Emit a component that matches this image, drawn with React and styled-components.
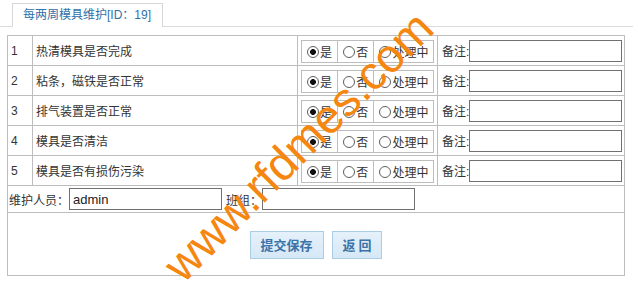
import React from 'react';
import styled, { createGlobalStyle } from 'styled-components';

const GlobalStyle = createGlobalStyle`
  html, body {
    margin: 0;
    padding: 0;
    background: #fff;
  }
  body {
    font-family: "Liberation Sans", "Noto Sans CJK SC", sans-serif;
    font-size: 12px;
    color: #333;
  }
`;

const items = [
  { no: 1, title: '热清模具是否完成' },
  { no: 2, title: '粘条，磁铁是否正常' },
  { no: 3, title: '排气装置是否正常' },
  { no: 4, title: '模具是否清洁' },
  { no: 5, title: '模具是否有损伤污染' },
];

const options = [
  { label: '是', width: 37 },
  { label: '否', width: 37 },
  { label: '处理中', width: 60 },
];

const App = () => {
  return (
    <Page>
      <GlobalStyle />
      <TabBar>
        <Tab>每两周模具维护[ID：19]</Tab>
      </TabBar>
      <Grid>
        <colgroup>
          <col style={{ width: 25 }} />
          <col style={{ width: 265 }} />
          <col style={{ width: 140 }} />
          <col />
        </colgroup>
        <tbody>
          {items.map((item) => (
            <Row key={item.no}>
              <Cell>{item.no}</Cell>
              <Cell>{item.title}</Cell>
              <Cell $center>
                <RadioTable>
                  <tbody>
                    <tr>
                      {options.map((opt, i) => (
                        <RadioCell key={opt.label} style={{ width: opt.width }}>
                          <Choice>
                            <Radio type="radio" name={`item${item.no}`} defaultChecked={i === 0} />
                            {opt.label}
                          </Choice>
                        </RadioCell>
                      ))}
                    </tr>
                  </tbody>
                </RadioTable>
              </Cell>
              <Cell>
                <Remark>
                  备注:<TextInput type="text" />
                </Remark>
              </Cell>
            </Row>
          ))}
          <InfoRow>
            <Cell colSpan={4}>
              <Fields>
                维护人员：<TextInput type="text" defaultValue="admin" />
                <FieldLabel>班组：</FieldLabel>
                <TextInput type="text" />
              </Fields>
            </Cell>
          </InfoRow>
          <ActionRow>
            <Cell colSpan={4}>
              <Actions>
                <Button>提交保存</Button>
                <Button>返 回</Button>
              </Actions>
            </Cell>
          </ActionRow>
        </tbody>
      </Grid>
      <Watermark>www.rfdmes.com</Watermark>
    </Page>
  );
};

const Page = styled.div`
  position: relative;
  width: 633px;
  height: 288px;
  padding-top: 3px;
  box-sizing: border-box;
  overflow: hidden;
`;

const TabBar = styled.div`
  display: flex;
  padding-left: 12px;
  border-bottom: 1px solid #dcdcdc;
  height: 23px;
`;

const Tab = styled.div`
  height: 24px;
  box-sizing: border-box;
  padding: 0 11px 0 10px;
  border: 1px solid #d6d6d6;
  border-bottom: none;
  background: #fff;
  color: #3171a9;
  font-size: 12px;
  line-height: 22px;
  margin-bottom: -1px;
`;

const Grid = styled.table`
  margin: 8px 0 0 7px;
  width: 618px;
  table-layout: fixed;
  border-collapse: collapse;
  border: 1px solid #bdbdbd;
`;

const Row = styled.tr`
  height: 30px;
`;

const InfoRow = styled.tr`
  height: 27px;
`;

const ActionRow = styled.tr`
  height: 63px;
`;

const Cell = styled.td`
  border: 1px solid #bdbdbd;
  padding: 0 3px;
  vertical-align: middle;
  text-align: ${({ $center }) => ($center ? 'center' : 'left')};
  white-space: nowrap;
  font-size: 12px;
  ${({ $center }) => $center && 'padding: 2px 3px 0;'}
`;

const RadioTable = styled.table`
  border-collapse: collapse;
  border: 1px solid #bdbdbd;
  margin: 0 auto;
  height: 23px;
`;

const RadioCell = styled.td`
  border: 1px solid #bdbdbd;
  padding: 0;
  text-align: left;
`;

const Choice = styled.label`
  display: flex;
  align-items: center;
  font-size: 12px;
  color: #333;
  white-space: nowrap;
`;

const Radio = styled.input`
  appearance: none;
  -webkit-appearance: none;
  width: 12px;
  height: 12px;
  margin: 0 1px 0 5px;
  border: 1px solid #5e5e5e;
  border-radius: 50%;
  background: #fff;
  box-sizing: border-box;
  flex: none;
  &:checked {
    background: radial-gradient(circle, #111 0, #111 2.6px, #fff 3.2px);
  }
`;

const Remark = styled.div`
  display: flex;
  align-items: center;
  padding-left: 1px;
`;

const TextInput = styled.input`
  width: 153px;
  height: 22px;
  box-sizing: border-box;
  margin: 0;
  padding: 0 3px;
  border: 1px solid #707070;
  border-radius: 0;
  font-family: "Liberation Sans", sans-serif;
  font-size: 13px;
  color: #222;
  background: #fff;
  outline: none;
`;

const Fields = styled.div`
  display: flex;
  align-items: center;
  margin-left: -2px;
`;

const FieldLabel = styled.span`
  margin-left: 4px;
`;

const Actions = styled.div`
  display: flex;
  justify-content: center;
  gap: 8px;
  padding-top: 1px;
`;

const Button = styled.button`
  height: 28px;
  padding: 0 10px;
  border: 1px solid #aacde6;
  background: linear-gradient(#e5f1fa, #d6e8f6);
  color: #3c73a8;
  font-family: "Noto Sans CJK SC", sans-serif;
  font-size: 13px;
  font-weight: bold;
  cursor: pointer;
`;

const Watermark = styled.div`
  position: absolute;
  left: 298px;
  top: 146px;
  transform: translate(-50%, -50%) rotate(-45deg);
  font-family: "Liberation Sans", sans-serif;
  font-size: 47px;
  line-height: 1;
  color: #f5860f;
  white-space: nowrap;
  pointer-events: none;
`;

export default App;
